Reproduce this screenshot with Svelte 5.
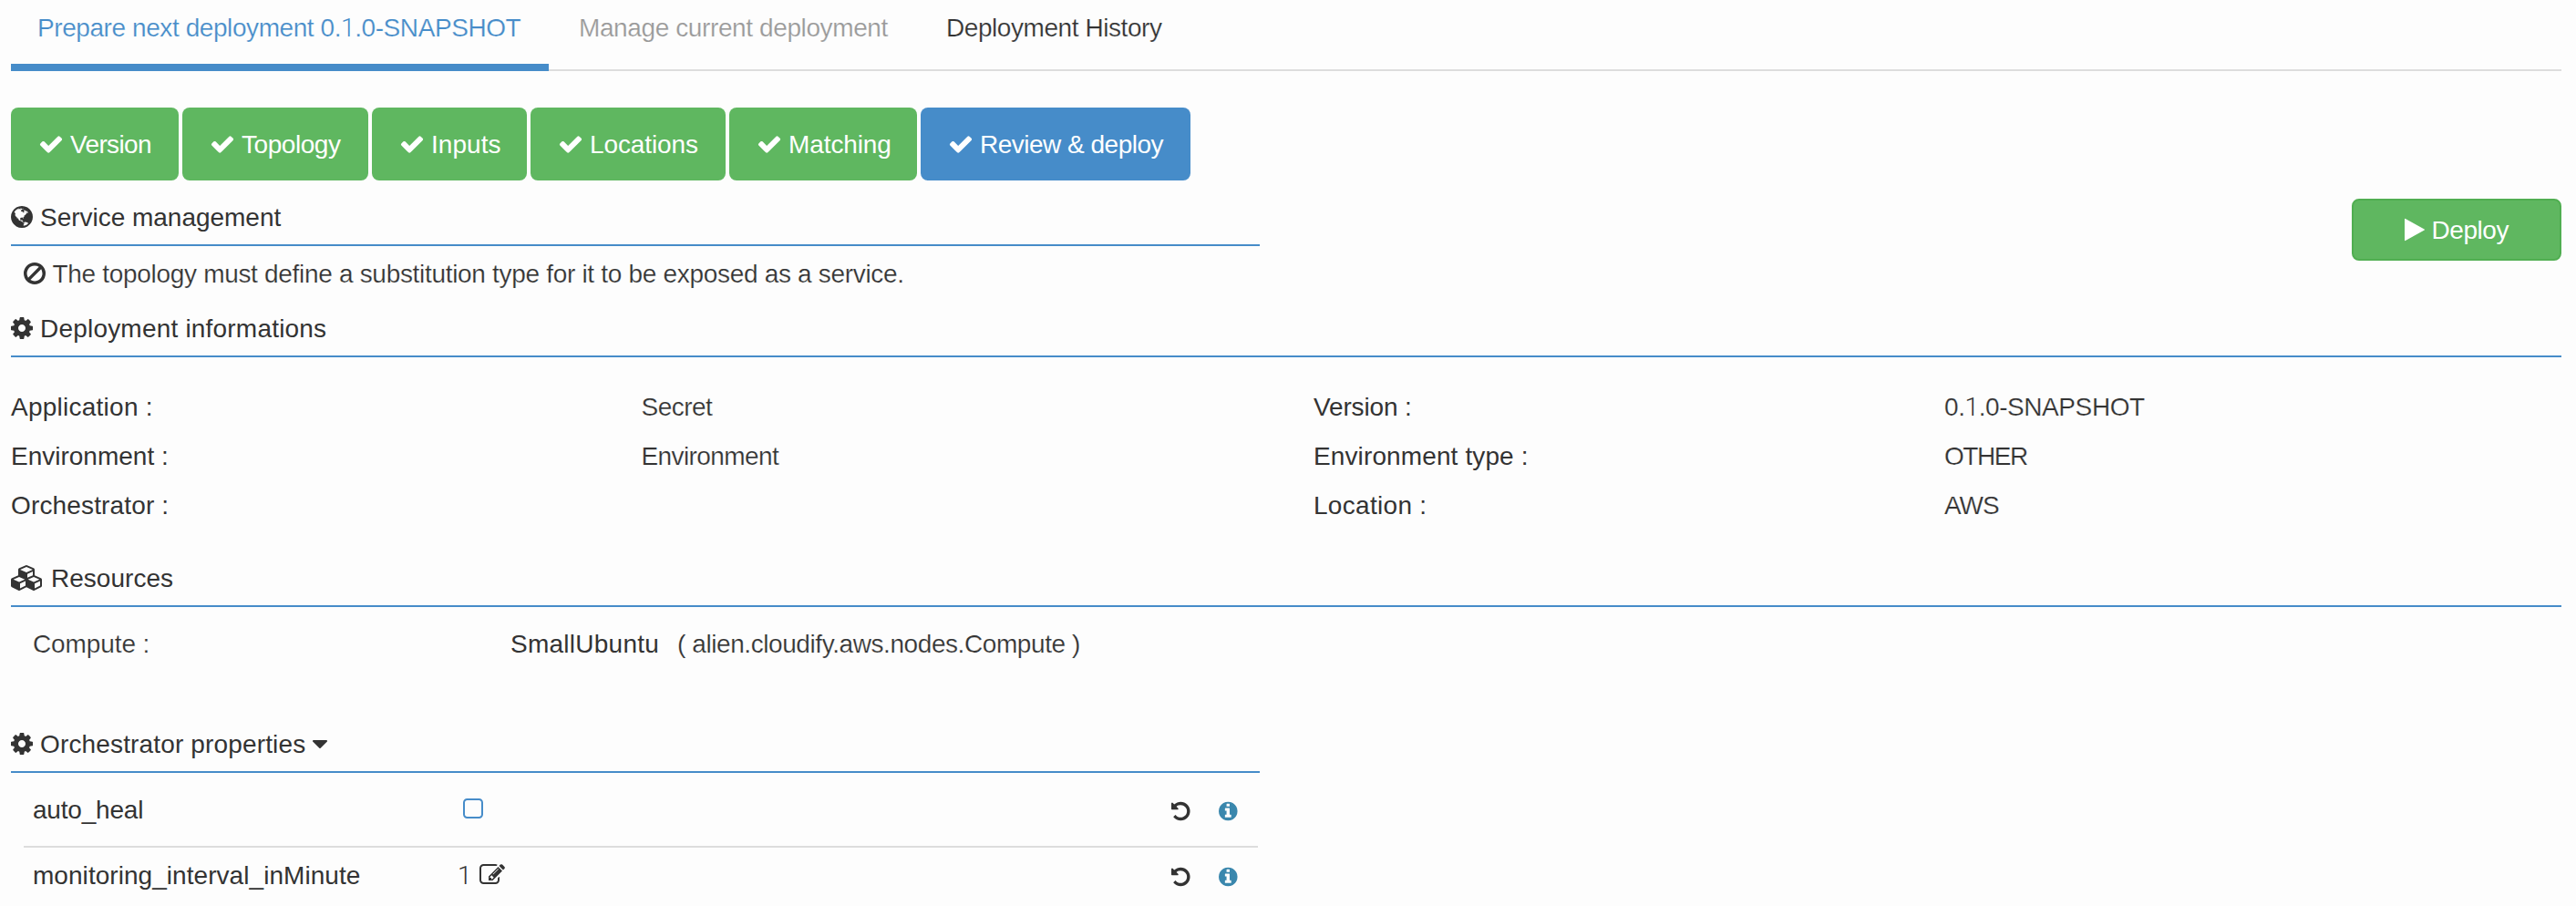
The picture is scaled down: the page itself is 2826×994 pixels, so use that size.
<script>
  // Glyphs share a 1792-unit em; each entry holds [left edge, advance, path].
  const icons = {
    check: [0, 1792, 'M1671 566q0 40-28 68l-724 724-136 136q-28 28-68 28t-68-28l-136-136-362-362q-28-28-28-68t28-68l136-136q28-28 68-28t68 28l294 295 656-657q28-28 68-28t68 28l136 136q28 28 28 68z'],
    globe: [128, 1536, 'M896 128q209 0 385.5 103t279.5 279.5 103 385.5-103 385.5-279.5 279.5-385.5 103-385.5-103-279.5-279.5-103-385.5 103-385.5 279.5-279.5 385.5-103zm274 521q-2 1-9.5 9.5t-13.5 9.5q2 0 4.5-5t5-11 3.5-7q6-7 22-15 14-6 52-12 34-8 51 11-2-2 9.5-13t14.5-12q3-2 15-4.5t15-7.5l2-22q-12 1-17.5-7t-6.5-21q0 2-6 8 0-7-4.5-8t-11.5 1-9 1q-10-3-15-7.5t-8-16.5-4-15q-2-5-9.5-11t-9.5-10q-1-2-2.5-5.5t-3-6.5-4-5.5-5.5-2.5-7 5-7.5 10-4.5 5q-3-2-6-1.5t-4.5 1-4.5 3-5 3.5q-3 2-8.5 3t-8.5 2q15-5-1-11-10-4-16-3 9-4 7.5-12t-8.5-14h5q-1-4-8.5-8.5t-17.5-8.5-13-6q-8-5-34-9.5t-33-.5q-5 6-4.5 10.5t4 14 3.5 12.5q1 6-5.5 13t-6.5 12q0 7 14 15.5t10 21.5q-3 8-16 16t-16 12q-5 8-1.5 18.5t10.5 16.5q2 2 1.5 4t-3.5 4.5-5.5 4-6.5 3.5l-3 2q-11 5-20.5-6t-13.5-26q-7-25-16-30-23-8-29 1-5-13-41-26-25-9-58-4 6-1 0-15-7-15-19-12 3-6 4-17.5t1-13.5q3-13 12-23 1-1 7-8.5t9.5-13.5.5-6q35 4 50-11 5-5 11.5-17t10.5-17q9-6 14-5.5t14.5 5.5 14.5 5q14 1 15.5-11t-7.5-20q12 1 3-17-4-7-8-9-12-4-27 5-8 4 2 8-1-1-9.5 10.5t-16.5 17.5-16-5q-1-1-5.5-13.5t-9.5-13.5q-8 0-16 15 3-8-11-15t-24-8q19-12-8-27-7-4-20.5-5t-19.5 4q-5 7-5.5 11.5t5 8 10.5 5.5 11.5 4 8.5 3q14 10 8 14-2 1-8.5 3.5t-11.5 4.5-6 4q-3 4 0 14t-2 14q-5-5-9-17.5t-7-16.5q7 9-25 6l-10-1q-4 0-16 2t-20.5 1-13.5-8q-4-8 0-20 1-4 4-2-4-3-11-9.5t-10-8.5q-46 15-94 41 6 1 12-1 5-2 13-6.5t10-5.5q34-14 42-7l5-5q14 16 20 25-7-4-30-1-20 6-22 12 7 12 5 18-4-3-11.5-10t-14.5-11-15-5q-16 0-22 1-146 80-235 222 7 7 12 8 4 1 5 9t2.5 11 11.5-3q9 8 3 19 1-1 44 27 19 17 21 21 3 11-10 18-1-2-9-9t-9-4q-3 5 .5 18.5t10.5 12.5q-7 0-9.5 16t-2.5 35.5-1 23.5l2 1q-3 12 5.5 34.5t21.5 19.5q-13 3 20 43 6 8 8 9 3 2 12 7.5t15 10 10 10.5q4 5 10 22.5t14 23.5q-2 6 9.5 20t10.5 23q-1 0-2.5 1t-2.5 1q3 7 15.5 14t15.5 13q1 3 2 10t3 11 8 2q2-20-24-62-15-25-17-29-3-5-5.5-15.5t-4.5-14.5q2 0 6 1.5t8.5 3.5 7.5 4 2 3q-3 7 2 17.5t12 18.5 17 19 12 13q6 6 14 19.5t0 13.5q9 0 20 10.5t17 19.5q5 8 8 26t5 24q2 7 8.5 13.5t12.5 9.5l16 8 13 7q5 2 18.5 10.5t21.5 11.5q10 4 16 4t14.5-2.5 13.5-3.5q15-2 29 15t21 21q36 19 55 11-2 1 .5 7.5t8 15.5 9 14.5 5.5 8.5q5 6 18 15t18 15q6-4 7-9-3 8 7 20t18 10q14-3 14-32-31 15-49-18 0-1-2.5-5.5t-4-8.5-2.5-8.5 0-7.5 5-3q9 0 10-3.5t-2-12.5-4-13q-1-8-11-20t-12-15q-5 9-16 8t-16-9q0 1-1.5 5.5t-1.5 6.5q-13 0-15-1 1-3 2.5-17.5t3.5-22.5q1-4 5.5-12t7.5-14.5 4-12.5-4.5-9.5-17.5-2.5q-19 1-26 20-1 3-3 10.5t-5 11.5-9 7q-7 3-24 2t-24-5q-13-8-22.5-29t-9.5-37q0-10 2.5-26.5t3-25-5.5-24.5q3-2 9-9.5t10-10.5q2-1 4.5-1.5t4.5 0 4-1.5 3-6q-1-1-4-3-3-3-4-3 7 3 28.5-1.5t27.5 1.5q15 11 22-2 0-1-2.5-9.5t-.5-13.5q5 27 29 9 3 3 15.5 5t17.5 5q3 2 7 5.5t5.5 4.5 5-.5 8.5-6.5q10 14 12 24 11 40 19 44 7 3 11 2t4.5-9.5 0-14-1.5-12.5l-1-8v-18l-1-8q-15-3-18.5-12t1.5-18.5 15-18.5q1-1 8-3.5t15.5-6.5 12.5-8q21-19 15-35 7 0 11-9-1 0-5-3t-7.5-5-4.5-2q9-5 2-16 5-3 7.5-11t7.5-10q9 12 21 2 8-8 1-16 5-7 20.5-10.5t18.5-9.5q7 2 8-2t1-12 3-12q4-5 15-9t13-5l17-11q3-4 0-4 18 2 31-11 10-11-6-20 3-6-3-9.5t-15-5.5q3-1 11.5-.5t10.5-1.5q15-10-7-16-17-5-43 12zm-163 877q206-36 351-189-3-3-12.5-4.5t-12.5-3.5q-18-7-24-8 1-7-2.5-13t-8-9-12.5-8-11-7q-2-2-7-6t-7-5.5-7.5-4.5-8.5-2-10 1l-3 1q-3 1-5.5 2.5t-5.5 3-4 3 0 2.5q-21-17-36-22-5-1-11-5.5t-10.5-7-10-1.5-11.5 7q-5 5-6 15t-2 13q-7-5 0-17.5t2-18.5q-3-6-10.5-4.5t-12 4.5-11.5 8.5-9 6.5-8.5 5.5-8.5 7.5q-3 4-6 12t-5 11q-2-4-11.5-6.5t-9.5-5.5q2 10 4 35t5 38q7 31-12 48-27 25-29 40-4 22 12 26 0 7-8 20.5t-7 21.5q0 6 2 16z'],
    ban: [128, 1536, 'M1440 893q0-161-87-295l-754 753q137 89 297 89 111 0 211.5-43.5t173.5-116.5 116-174.5 43-212.5zm-999 299l755-754q-135-91-300-91-148 0-273 73t-198 199-73 274q0 162 89 299zm1223-299q0 157-61 300t-163.5 246-245 164-298.5 61-298.5-61-245-164-163.5-246-61-300 61-299.5 163.5-245.5 245-164 298.5-61 298.5 61 245 164 163.5 245.5 61 299.5z'],
    cog: [128, 1536, 'M1152 896q0-106-75-181t-181-75-181 75-75 181 75 181 181 75 181-75 75-181zm512-109v222q0 12-8 23t-20 13l-185 28q-19 54-39 91 35 50 107 138 10 12 10 25t-9 23q-27 37-99 108t-94 71q-12 0-26-9l-138-108q-44 23-91 38-16 136-29 186-7 28-36 28h-222q-14 0-24.5-8.5t-11.5-21.5l-28-184q-49-16-90-37l-141 107q-10 9-25 9-14 0-25-11-126-114-165-168-7-10-7-23 0-12 8-23 15-21 51-66.5t54-70.5q-27-50-41-99l-183-27q-13-2-21-12.5t-8-23.5v-222q0-12 8-23t19-13l186-28q14-46 39-92-40-57-107-138-10-12-10-24 0-10 9-23 26-36 98.5-107.5t94.5-71.5q13 0 26 10l138 107q44-23 91-38 16-136 29-186 7-28 36-28h222q14 0 24.5 8.5t11.5 21.5l28 184q49 16 90 37l142-107q9-9 24-9 13 0 25 10 129 119 165 170 7 8 7 22 0 12-8 23-15 21-51 66.5t-54 70.5q26 50 41 98l183 28q13 2 21 12.5t8 23.5z'],
    cubes: [0, 2176, 'M640 1632l384-192v-314l-384 164v342zm-64-454l404-173-404-173-404 173zm1088 454l384-192v-314l-384 164v342zm-64-454l404-173-404-173-404 173zm-448-293l384-165v-266l-384 164v267zm-64-379l441-189-441-189-441 189zm1088 518v416q0 36-19 67t-52 47l-448 224q-25 14-57 14t-57-14l-448-224q-4-2-7-4-2 2-7 4l-448 224q-25 14-57 14t-57-14l-448-224q-33-16-52-47t-19-67v-416q0-38 21.5-70t56.5-48l434-186v-400q0-38 21.5-70t56.5-48l448-192q23-10 50-10t50 10l448 192q35 16 56.5 48t21.5 70v400l434 186q36 16 57 48t21 70z'],
    play: [192, 1408, 'M1576 927l-1328 738q-23 13-39.5 3t-16.5-36v-1472q0-26 16.5-36t39.5 3l1328 738q23 13 23 31t-23 31z'],
    caret: [384, 1024, 'M1408 704q0 26-19 45l-448 448q-19 19-45 19t-45-19l-448-448q-19-19-19-45t19-45 45-19h896q26 0 45 19t19 45z'],
    square: [192, 1408, 'M1312 256h-832q-66 0-113 47t-47 113v832q0 66 47 113t113 47h832q66 0 113-47t47-113v-832q0-66-47-113t-113-47zm288 160v832q0 119-84.5 203.5t-203.5 84.5h-832q-119 0-203.5-84.5t-84.5-203.5v-832q0-119 84.5-203.5t203.5-84.5h832q119 0 203.5 84.5t84.5 203.5z'],
    edit: [0, 1792, 'M888 1184l116-116-152-152-116 116v56h96v96h56zm440-720q-16-16-33 1l-350 350q-17 17-1 33t33-1l350-350q17-17 1-33zm80 594v190q0 119-84.5 203.5t-203.5 84.5h-832q-119 0-203.5-84.5t-84.5-203.5v-832q0-119 84.5-203.5t203.5-84.5h832q63 0 117 25 15 7 18 23 3 17-9 29l-49 49q-14 14-32 8-23-6-45-6h-832q-66 0-113 47t-47 113v832q0 66 47 113t113 47h832q66 0 113-47t47-113v-126q0-13 9-22l64-64q15-15 35-7t20 29zm-96-738l288 288-672 672h-288v-288zm444 132l-92 92-288-288 92-92q28-28 68-28t68 28l152 152q28 28 28 68t-28 68z'],
    undo: [128, 1536, 'M1664 896q0 156-61 298t-164 245-245 164-298 61q-172 0-327-72.5t-264-204.5q-7-10-6.5-22.5t8.5-20.5l137-138q10-9 25-9 16 2 23 12 73 95 179 147t225 52q104 0 198.5-40.5t163.5-109.5 109.5-163.5 40.5-198.5-40.5-198.5-109.5-163.5-163.5-109.5-198.5-40.5q-98 0-188 35.5t-160 101.5l137 138q31 30 14 69-17 40-59 40h-448q-26 0-45-19t-19-45v-448q0-42 40-59 39-17 69 14l130 129q107-101 244.5-156.5t284.5-55.5q156 0 298 61t245 164 164 245 61 298z'],
    info: [128, 1536, 'M1152 1376v-160q0-14-9-23t-23-9h-96v-512q0-14-9-23t-23-9h-320q-14 0-23 9t-9 23v160q0 14 9 23t23 9h96v320h-96q-14 0-23 9t-9 23v160q0 14 9 23t23 9h448q14 0 23-9t9-23zm-128-896v-160q0-14-9-23t-23-9h-192q-14 0-23 9t-9 23v160q0 14 9 23t23 9h192q14 0 23-9t9-23zm640 416q0 209-103 385.5t-279.5 279.5-385.5 103-385.5-103-279.5-279.5-103-385.5 103-385.5 279.5-279.5 385.5-103 385.5 103 279.5 279.5 103 385.5z']
  };

  const steps = [
    { label: 'Version', width: 184, track: -0.64 },
    { label: 'Topology', width: 204, track: -0.44 },
    { label: 'Inputs', width: 170, track: 0.04 },
    { label: 'Locations', width: 214, track: -0.11 },
    { label: 'Matching', width: 206, track: -0.1 },
    { label: 'Review & deploy', width: 296, track: -0.5, active: true }
  ];

  const details = [
    { label: 'Application :', lt: 0.25, value: 'Secret', vt: -0.53 },
    { label: 'Version :', lt: -0.15, value: '0.1.0-SNAPSHOT', vt: -0.42 },
    { label: 'Environment :', lt: 0, value: 'Environment', vt: -0.6 },
    { label: 'Environment type :', lt: 0.12, value: 'OTHER', vt: -1.44 },
    { label: 'Orchestrator :', lt: 0.15, value: '', vt: 0 },
    { label: 'Location :', lt: 0.3, value: 'AWS', vt: -1.03 }
  ];
</script>

{#snippet icon(name, size = 28)}
  <svg class="icon" viewBox="{icons[name][0]} 0 {icons[name][1]} 1792" width={(icons[name][1] * size) / 1792} height={size} fill="currentColor" aria-hidden="true"><path d={icons[name][2]} /></svg>
{/snippet}

{#snippet text(value, track = 0)}
  <span style="letter-spacing:{track}px">{#each value.split(/(1)/) as part}{#if part === '1'}<span class="one">1</span>{:else}{part}{/if}{/each}</span>
{/snippet}

<div class="page">
  <nav class="tabs">
    <a class="tab active">{@render text('Prepare next deployment 0.1.0-SNAPSHOT', -0.42)}</a>
    <a class="tab disabled">{@render text('Manage current deployment', -0.39)}</a>
    <a class="tab">{@render text('Deployment History', -0.43)}</a>
  </nav>

  <div class="steps">
    {#each steps as s}
      <div class="step" class:current={s.active} style="width:{s.width}px">
        {@render icon('check')}{@render text(s.label, s.track)}
      </div>
    {/each}
  </div>

  <div class="top">
    <section class="half">
      <h4>{@render icon('globe')}{@render text('Service management', -0.02)}</h4>
      <p class="notice light">
        {@render icon('ban')}{@render text('The topology must define a substitution type for it to be exposed as a service.', -0.31)}
      </p>
    </section>
    <button class="deploy">{@render icon('play')}{@render text('Deploy', -0.43)}</button>
  </div>

  <h4>{@render icon('cog')}{@render text('Deployment informations', 0.2)}</h4>
  <div class="details">
    {#each details as d}
      <div>{@render text(d.label, d.lt)}</div>
      <div class="light">{@render text(d.value, d.vt)}</div>
    {/each}
  </div>

  <h4 class="resources">{@render icon('cubes')}{@render text('Resources', 0.02)}</h4>
  <div class="resource">
    <div class="light">{@render text('Compute :', -0.1)}</div>
    <div>{@render text('SmallUbuntu', 0.25)}</div>
    <div class="light">{@render text('( alien.cloudify.aws.nodes.Compute )', -0.42)}</div>
  </div>

  <section class="half props">
    <h4>{@render icon('cog')}{@render text('Orchestrator properties', 0.15)}<span class="caret">{@render icon('caret')}</span></h4>
    <div class="rows">
      <div class="prop">
        <div>{@render text('auto_heal', -0.2)}</div>
        <div class="value box">{@render icon('square')}</div>
        <div class="value">{@render icon('undo', 24)}</div>
        <div class="value help">{@render icon('info', 24)}</div>
      </div>
      <div class="prop last">
        <div>{@render text('monitoring_interval_inMinute', 0.05)}</div>
        <div class="value num">{@render text('1')}{@render icon('edit')}</div>
        <div class="value">{@render icon('undo', 24)}</div>
        <div class="value help">{@render icon('info', 24)}</div>
      </div>
    </div>
  </section>
</div>

<style>
  :global(body) {
    background: #fdfdfd;
  }
  .page {
    box-sizing: border-box;
    width: 2826px;
    height: 994px;
    overflow: hidden;
    padding: 0 16px 0 12px;
    background: #fdfdfd;
    color: #333;
    font: 28px/41px 'Liberation Sans', Arial, sans-serif;
    white-space: nowrap;
  }
  /* The glyph box hangs 4px below the text baseline. */
  .icon {
    display: block;
    flex: none;
    position: relative;
    top: 4px;
  }
  .one {
    font-family: Roboto, sans-serif;
    font-weight: 300;
    line-height: 0;
    -webkit-text-stroke: 0;
  }
  .light {
    -webkit-text-stroke: 0.22px #fdfdfd;
  }
  .tabs {
    display: flex;
    height: 78px;
    box-shadow: inset 0 -2px #ddd;
  }
  .tab {
    box-sizing: border-box;
    padding: 10px 31px 0;
    -webkit-text-stroke: 0.22px #fdfdfd;
  }
  .tab.active {
    width: 590px;
    padding-left: 29px;
    border-bottom: 8px solid #468cc9;
    color: #468cc9;
  }
  .tab.disabled {
    width: 405px;
    padding-left: 33px;
    color: #999;
  }
  .steps {
    display: flex;
    gap: 4px;
    margin-top: 40px;
  }
  .step {
    display: flex;
    align-items: baseline;
    gap: 7px;
    box-sizing: border-box;
    height: 80px;
    padding-left: 30px;
    border-radius: 8px;
    background: #5fb760;
    color: #fff;
    line-height: 81px;
  }
  .step.current {
    background: #468cc9;
  }
  .top {
    display: flex;
    justify-content: space-between;
    align-items: flex-start;
    height: 122px;
    margin-top: 20px;
  }
  .half {
    width: 1370px;
  }
  h4 {
    display: flex;
    align-items: baseline;
    gap: 8px;
    margin: 0;
    padding-bottom: 9px;
    border-bottom: 2px solid #468cc9;
    font-size: 28px;
    font-weight: 400;
  }
  .notice {
    display: flex;
    align-items: baseline;
    gap: 7.5px;
    margin: 10px 0 0;
    padding-left: 14px;
  }
  .deploy {
    display: flex;
    align-items: baseline;
    gap: 7.5px;
    box-sizing: border-box;
    width: 230px;
    height: 68px;
    padding: 0 0 0 56px;
    border: 2px solid #50ae51;
    border-radius: 8px;
    background: #5fb760;
    color: #fff;
    font: inherit;
    line-height: 65px;
  }
  .details {
    display: grid;
    grid-template-columns: 691.5px 737.5px 692px 1fr;
    grid-auto-rows: 54px;
    margin-top: 28px;
    line-height: 53px;
  }
  .resources {
    gap: 10px;
    margin-top: 32px;
  }
  .resource {
    display: grid;
    grid-template-columns: 524px 183px 1fr;
    margin-top: 20px;
    padding-left: 24px;
  }
  .props {
    margin-top: 69px;
  }
  .caret {
    display: flex;
  }
  .rows {
    margin: 0 2px 0 14px;
  }
  .prop {
    display: grid;
    grid-template-columns: 472px 777px 52px 1fr;
    align-items: baseline;
    height: 80px;
    padding-left: 10px;
    border-bottom: 2px solid #ddd;
    line-height: 81px;
  }
  .prop.last {
    border: 0;
    line-height: 61px;
  }
  .value {
    display: flex;
    align-items: baseline;
  }
  .box {
    color: #468cc9;
  }
  .num {
    gap: 8px;
    margin-left: -6px;
  }
  .help {
    color: #3a87ad;
  }
</style>
